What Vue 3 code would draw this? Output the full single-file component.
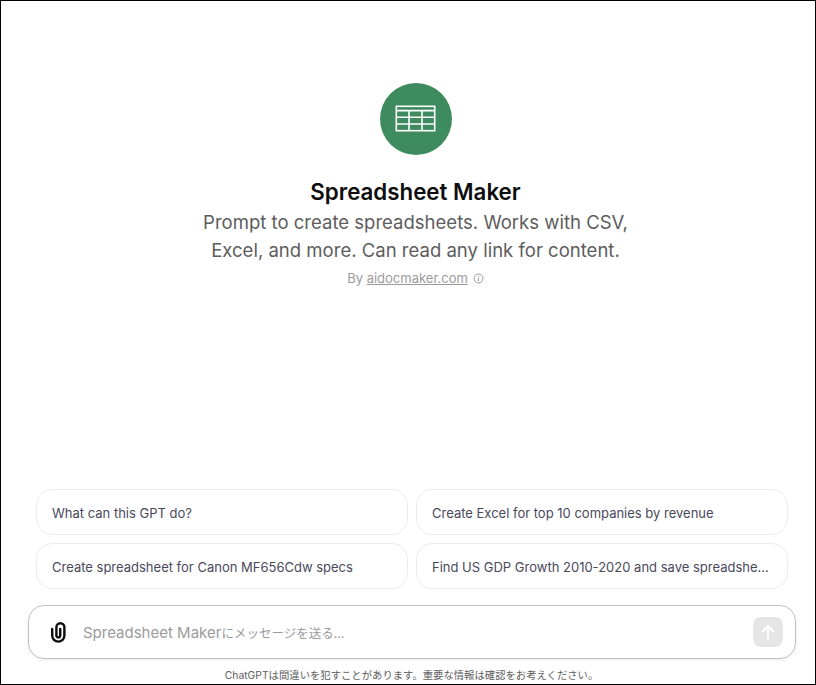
<template>
  <div class="page">
    <!-- GPT の紹介 -->
    <div class="intro">
      <div class="avatar">
        <svg width="42" height="28" viewBox="0 0 42 28" fill="none" stroke="#fff" stroke-width="1.6">
          <rect x="1.3" y="1.3" width="38.4" height="24.4" />
          <path d="M1.3 5.6H39.7M1.3 12.2H39.7M1.3 19H39.7M14 5.6V25.7M27 5.6V25.7" />
        </svg>
      </div>
      <h1 class="title">Spreadsheet Maker</h1>
      <p class="desc">Prompt to create spreadsheets. Works with CSV,<br />Excel, and more. Can read any link for content.</p>
      <div class="by">
        <span>By <a class="link">aidocmaker.com</a></span>
        <svg width="11" height="11" viewBox="0 0 11 11" fill="none" stroke="#9b9b9b" stroke-width="1">
          <circle cx="5.5" cy="5.5" r="4.5" />
          <path d="M5.5 5V8M5.5 3V4" />
        </svg>
      </div>
    </div>

    <!-- 提案カード -->
    <div class="cards">
      <div class="card" v-for="item in prompts" :key="item">{{ item }}</div>
    </div>

    <!-- 入力欄 -->
    <div class="composer">
      <svg class="clip" width="24" height="24" viewBox="0 0 24 24" fill="none">
        <path d="M6.2 9V15.5a6.1 6.1 0 0 0 12.2 0V7.3a4 4 0 0 0-8 0V15.5a1.9 1.9 0 0 0 3.8 0V9" stroke="#0d0d0d" stroke-width="2.4" stroke-linecap="round" />
      </svg>
      <span class="placeholder">Spreadsheet Maker<span class="ja">にメッセージを送る...</span></span>
      <button class="send">
        <svg width="20" height="20" viewBox="0 0 20 20" fill="none" stroke="#fff" stroke-width="2" stroke-linecap="round" stroke-linejoin="round">
          <path d="M10 16.5V4M4.8 9.2L10 4l5.2 5.2" />
        </svg>
      </button>
    </div>
    <div class="note">ChatGPTは間違いを犯すことがあります。重要な情報は確認をお考えください。</div>
  </div>
</template>

<script setup>
const prompts = [
  "What can this GPT do?",
  "Create Excel for top 10 companies by revenue",
  "Create spreadsheet for Canon MF656Cdw specs",
  "Find US GDP Growth 2010-2020 and save spreadshe...",
];
</script>

<style>
html,
body {
  margin: 0;
  background: #fff;
}
</style>

<style scoped>
.page {
  width: 816px;
  height: 685px;
  box-sizing: border-box;
  border: 1px solid #000;
  display: flex;
  flex-direction: column;
  font-family: Inter, "Noto Sans CJK JP", sans-serif;
  overflow: hidden;
}

.intro {
  flex: 1;
  display: flex;
  flex-direction: column;
  align-items: center;
  padding: 82px 0 0 15px;
}

.avatar {
  width: 72px;
  height: 72px;
  border-radius: 50%;
  background: #3d8b5f;
  display: flex;
  align-items: center;
  justify-content: center;
}

.title {
  margin: 22px 0 0;
  font-size: 22.3px;
  line-height: 30px;
  font-weight: 600;
  color: #0d0d0d;
}

.desc {
  margin: 1px 0 0;
  font-size: 18.55px;
  line-height: 28px;
  color: #5d5d5d;
  text-align: center;
}

.by {
  margin-top: 5px;
  display: flex;
  align-items: center;
  gap: 5px;
  font-size: 13px;
  line-height: 18px;
  color: #9b9b9b;
}

.link {
  text-decoration: underline;
}

.cards {
  display: grid;
  grid-template-columns: 372px 372px;
  gap: 8px;
  padding-left: 35px;
}

.card {
  height: 46px;
  box-sizing: border-box;
  border: 1px solid #ececec;
  border-radius: 16px;
  padding: 2px 15px 0;
  display: flex;
  align-items: center;
  font-size: 13px;
  color: #49495c;
  white-space: nowrap;
}

.composer {
  margin: 16px 0 0 27px;
  width: 768px;
  height: 54px;
  box-sizing: border-box;
  border: 1px solid #c0c0c0;
  border-radius: 16px;
  box-shadow: 0 1px 3px rgba(0, 0, 0, 0.08);
  display: flex;
  align-items: center;
  padding: 0 12px 0 17px;
}

.clip {
  flex: none;
}

.placeholder {
  margin-left: 13px;
  flex: 1;
  font-size: 15px;
  color: #9b9b9b;
}

.ja {
  font-size: 12.5px;
}

.send {
  width: 30px;
  height: 30px;
  border: none;
  padding: 0;
  border-radius: 8px;
  background: #e5e5e5;
  display: flex;
  align-items: center;
  justify-content: center;
}

.note {
  margin-top: 7px;
  height: 18px;
  line-height: 18px;
  padding-left: 7px;
  text-align: center;
  font-size: 10.35px;
  color: #5d5d5d;
}
</style>
